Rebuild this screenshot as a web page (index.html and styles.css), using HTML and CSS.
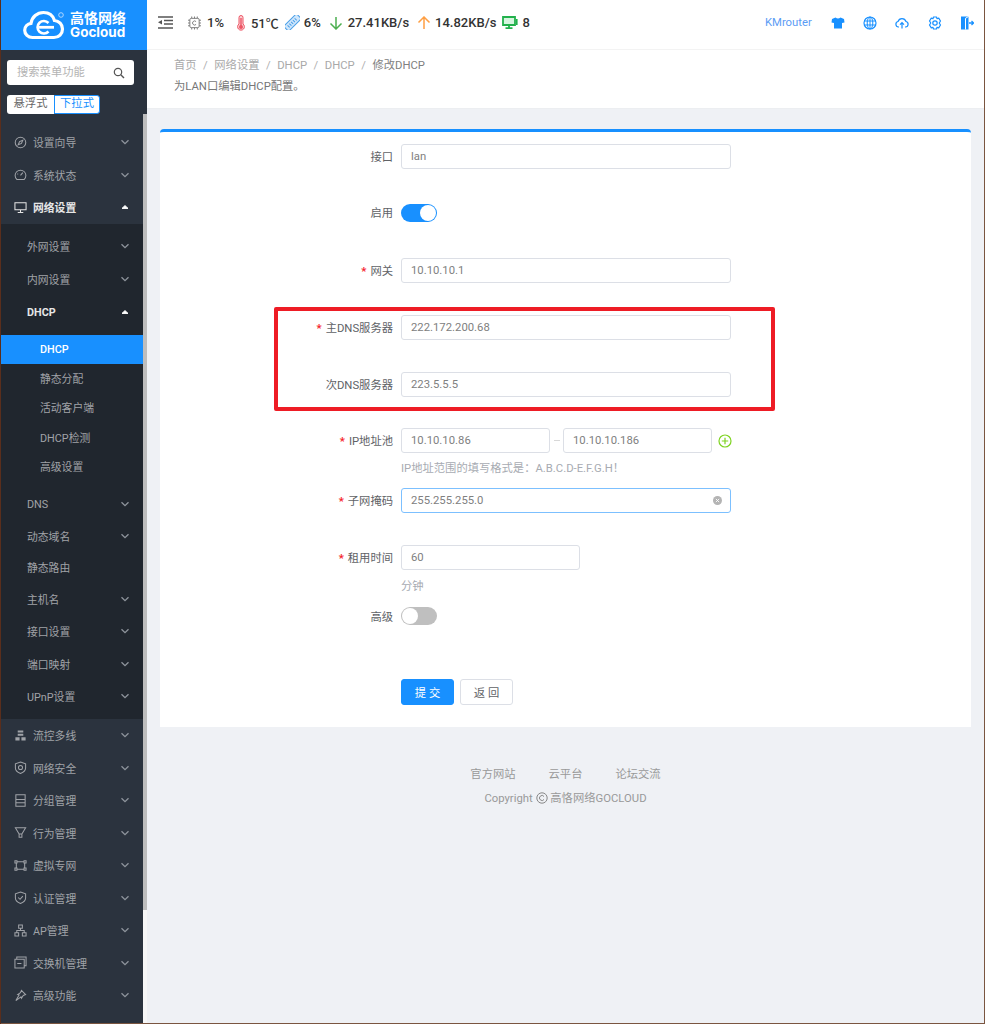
FILE: index.html
```html
<!DOCTYPE html>
<html lang="zh-CN">
<head>
<meta charset="utf-8">
<title>修改DHCP</title>
<link rel="stylesheet" href="styles.css">
</head>
<body>
<svg class="sprite" width="0" height="0" aria-hidden="true">
  <symbol id="down" viewBox="0 0 10 10"><path d="M1.500 3.200 5 6.700l3.500-3.500" fill="none" stroke="currentColor" stroke-width="1.300"/></symbol>
  <symbol id="up" viewBox="0 0 10 10"><path d="M2 6.400 5 3.600l3 2.800z" fill="currentColor" stroke="currentColor"/></symbol>
</svg>
<div class="app">
  <aside class="side">
    <a class="logo">
      <svg class="logo-mark" viewBox="0 0 44 30"><path d="M9.500 27.500C5 27.500 1.700 24.300 1.700 20.300 1.700 16.500 4.500 13.800 8 13.300 9 7 14 2.500 20.500 2.500 26 2.500 30 5.500 31.500 10.500 36 10.800 39.500 14.500 39.500 19 39.500 23.800 35.800 27.500 31 27.500Z" fill="none" stroke="#fff" stroke-width="3.200"/><path d="M25.500 13A6.300 6.300 0 1 0 25.500 21.500" fill="none" stroke="#fff" stroke-width="2.600"/><path d="M15.500 17.300H31" stroke="#fff" stroke-width="2.800"/><circle cx="38" cy="5" r="2.300" fill="none" stroke="#cfe6ff" stroke-width="0.800"/></svg>
      <span class="logo-text"><b class="logo-cn">高恪网络</b><b class="logo-en">Gocloud</b></span>
    </a>
    <div class="side-tools">
      <div class="search"><span>搜索菜单功能</span>
        <svg class="search-icon" viewBox="0 0 12 12"><circle cx="5" cy="5" r="3.700" fill="none" stroke="#555" stroke-width="1.200"/><path d="M7.800 7.800 11 11" stroke="#555" stroke-width="1.400"/></svg>
      </div>
      <div class="mode"><span class="mode-btn">悬浮式</span><span class="mode-btn on">下拉式</span></div>
    </div>
    <div class="side-body">
      <nav class="menu">
        <a class="item"><svg class="ico" viewBox="0 0 14 14"><circle cx="7" cy="7" r="5.700"/><path d="M9.500 4.500 8 8 4.500 9.500 6 6z"/></svg><span>设置向导</span><svg class="arr"><use href="#down"/></svg></a>
        <a class="item"><svg class="ico" viewBox="0 0 14 14"><path d="M3 12.300a5.800 5.800 0 1 1 8 0z"/><path d="M7 8l2.500-3M3.500 6.500h1"/></svg><span>系统状态</span><svg class="arr"><use href="#down"/></svg></a>
        <a class="item open"><svg class="ico" viewBox="0 0 14 14"><path d="M1 2h12v7.500H1zM7 9.500v2.500M4 12.500h6"/></svg><span>网络设置</span><svg class="arr"><use href="#up"/></svg></a>
        <div class="sub">
          <a class="sitem"><span>外网设置</span><svg class="arr"><use href="#down"/></svg></a>
          <a class="sitem"><span>内网设置</span><svg class="arr"><use href="#down"/></svg></a>
          <a class="sitem open"><span>DHCP</span><svg class="arr"><use href="#up"/></svg></a>
          <div class="subsub">
            <a class="leaf active">DHCP</a>
            <a class="leaf">静态分配</a>
            <a class="leaf">活动客户端</a>
            <a class="leaf">DHCP检测</a>
            <a class="leaf">高级设置</a>
          </div>
          <a class="sitem dns"><span>DNS</span><svg class="arr"><use href="#down"/></svg></a>
          <a class="sitem"><span>动态域名</span><svg class="arr"><use href="#down"/></svg></a>
          <a class="sitem plain"><span>静态路由</span></a>
          <a class="sitem"><span>主机名</span><svg class="arr"><use href="#down"/></svg></a>
          <a class="sitem"><span>接口设置</span><svg class="arr"><use href="#down"/></svg></a>
          <a class="sitem"><span>端口映射</span><svg class="arr"><use href="#down"/></svg></a>
          <a class="sitem"><span>UPnP设置</span><svg class="arr"><use href="#down"/></svg></a>
        </div>
        <a class="item"><svg class="ico" viewBox="0 0 14 14"><path class="fillo" d="M4 1.500h6v2.200H4zM4 5h6v2.200H4zM1.500 9h4.500v3.500H1.500zM8 9h4.500v3.500H8z"/></svg><span>流控多线</span><svg class="arr"><use href="#down"/></svg></a>
        <a class="item"><svg class="ico" viewBox="0 0 14 14"><path d="M7 1 12.500 3v4.500C12.500 10.500 9.500 12.500 7 13.500 4.500 12.500 1.500 10.500 1.500 7.500V3z"/><circle cx="7" cy="7" r="2.200"/></svg><span>网络安全</span><svg class="arr"><use href="#down"/></svg></a>
        <a class="item"><svg class="ico" viewBox="0 0 14 14"><path d="M2 .800h10v12.400H2zM2 6h10M2 9.500h10"/></svg><span>分组管理</span><svg class="arr"><use href="#down"/></svg></a>
        <a class="item"><svg class="ico" viewBox="0 0 14 14"><path d="M1.500 2h11L8.500 8.500h-3zM5.500 8.500v3.500h3V8.500"/></svg><span>行为管理</span><svg class="arr"><use href="#down"/></svg></a>
        <a class="item"><svg class="ico" viewBox="0 0 14 14"><path d="M2.500 3h9v8h-9z"/><path class="solid" d="M1 2h2.200v2.200H1zM10.800 2H13v2.200h-2.200zM1 9.800h2.200V12H1zM10.800 9.800H13V12h-2.200z"/></svg><span>虚拟专网</span><svg class="arr"><use href="#down"/></svg></a>
        <a class="item"><svg class="ico" viewBox="0 0 14 14"><path d="M7 1 12.500 3v4.500C12.500 10.500 9.500 12.500 7 13.500 4.500 12.500 1.500 10.500 1.500 7.500V3z"/><path d="M4.500 7 6.500 9 9.500 5.500"/></svg><span>认证管理</span><svg class="arr"><use href="#down"/></svg></a>
        <a class="item"><svg class="ico" viewBox="0 0 14 14"><path d="M5 1h4v3.500H5zM1 9.500h4V13H1zM9 9.500h4V13H9zM7 4.500v2.500M3 9.500V7h8v2.500"/></svg><span>AP管理</span><svg class="arr"><use href="#down"/></svg></a>
        <a class="item"><svg class="ico" viewBox="0 0 14 14"><path d="M1 3.500h10v9.500H1zM3 3.500V1h10v9.500h-2M3.500 8H8"/></svg><span>交换机管理</span><svg class="arr"><use href="#down"/></svg></a>
        <a class="item"><svg class="ico" viewBox="0 0 14 14"><path d="M8 1.500 12.500 6 10 7 8 10 7.500 8.500 2 12.500 5.500 6.500 4 6 7 4z"/></svg><span>高级功能</span><svg class="arr"><use href="#down"/></svg></a>
      </nav>
      <div class="sbar"><div class="sthumb"></div></div>
    </div>
  </aside>

  <div class="main">
    <header class="top">
      <svg class="fold" viewBox="0 0 15 13"><path d="M0 1h15M6 4.500h9M6 8h9M0 12h15" stroke="#555" stroke-width="1.300" fill="none"/><path d="M0 6.300 4 4v4.600z" fill="#555"/></svg>
      <svg class="st chip" viewBox="0 0 14 14"><rect x="2" y="2" width="10" height="10" rx="1.500" fill="none" stroke="#777" stroke-width="1"/><path d="M4 0v2M7 0v2M10 0v2M4 12v2M7 12v2M10 12v2M0 4h2M0 7h2M0 10h2M12 4h2M12 7h2M12 10h2" stroke="#777"/><path d="M8.700 5.500a2.200 2.200 0 1 0 0 3" fill="none" stroke="#777"/></svg>
      <b class="val v1">1%</b>
      <svg class="st therm" viewBox="0 0 8 16"><path d="M2 9V2.500a2 2 0 0 1 4 0V9a3.400 3.400 0 1 1-4 0z" fill="#fbd0d3" stroke="#ed5565"/><path d="M4 3v8" stroke="#ed5565" stroke-width="1.400"/><circle cx="4" cy="12" r="2" fill="#ed5565"/></svg>
      <b class="val v2">51℃</b>
      <svg class="st ram" viewBox="0 0 15 15"><g transform="rotate(-45 7.500 7.500)"><rect x="-1.500" y="4" width="18" height="7" rx="0.700" fill="#cfe6fb" stroke="#4a9fe8"/><path d="M2 6v3M4.500 6v3M7 6v3M9.500 6v3M12 6v3" stroke="#4a9fe8"/></g></svg>
      <b class="val v3">6%</b>
      <svg class="st dn" viewBox="0 0 14 14"><path d="M7 1v12M1.500 7.500 7 13l5.500-5.500" fill="none" stroke="#4caf50" stroke-width="1.500"/></svg>
      <b class="val v4">27.41KB/s</b>
      <svg class="st upa" viewBox="0 0 14 14"><path d="M7 13V1M1.500 6.500 7 1l5.500 5.500" fill="none" stroke="#ff9f43" stroke-width="1.500"/></svg>
      <b class="val v5">14.82KB/s</b>
      <svg class="st mon" viewBox="0 0 16 13"><path d="M1 1h12v8H1z" fill="#d6f5df" stroke="#22b14c" stroke-width="1.800"/><path d="M14.800 3v6" stroke="#22b14c" stroke-width="1.600"/><path d="M3.500 12.200h7M7 9v3" stroke="#22b14c" stroke-width="1.800"/></svg>
      <b class="val v6">8</b>
      <span class="spacer"></span>
      <a class="user">KMrouter</a>
      <svg class="act" viewBox="0 0 14 14"><path d="M4.500 1.500 1 3 0.500 6.500 3 7v5.500h8V7l2.500-.5L13 3 9.500 1.500Q7 3.500 4.500 1.500z" fill="#1890ff"/></svg>
      <svg class="act" viewBox="0 0 14 14"><g fill="none" stroke="#1890ff"><circle cx="7" cy="7" r="6" stroke-width="1.200"/><ellipse cx="7" cy="7" rx="2.800" ry="6"/><path d="M1 5h12M1 9h12M7 1v12"/></g></svg>
      <svg class="act" viewBox="0 0 14 14"><g fill="none" stroke="#1890ff" stroke-width="1.200"><path d="M4 11H3.500A2.800 2.800 0 0 1 3 5.500 4.200 4.200 0 0 1 11 5.500 2.800 2.800 0 0 1 10.500 11H10"/><path d="M7 12.500V7M5 8.700 7 6.700 9 8.700"/></g></svg>
      <svg class="act" viewBox="0 0 14 14"><g fill="none" stroke="#1890ff" stroke-width="1.200"><path d="M5.500 1h3l.5 1.700 1.700-.6L12.500 5l-1.300 2 1.300 2-1.800 2.900L9 11.300 8.500 13h-3L5 11.300l-1.700.6L1.500 9l1.300-2-1.300-2 1.800-2.900 1.700.6z" stroke-linejoin="round"/><circle cx="7" cy="7" r="2.200"/></g></svg>
      <svg class="act" viewBox="0 0 14 14"><path d="M1 .500h7.500v13H1z" fill="#1890ff"/><path d="M8.500 .500 5.500 2.300v11.200" fill="none" stroke="#fff"/><path d="M9 7h4.500M11.500 5l2.200 2-2.200 2" fill="none" stroke="#1890ff" stroke-width="1.300"/></svg>
    </header>

    <section class="crumbs">
      <div class="path"><a>首页</a><i>/</i><a>网络设置</a><i>/</i><a>DHCP</a><i>/</i><a>DHCP</a><i>/</i><em>修改DHCP</em></div>
      <p class="desc">为LAN口编辑DHCP配置。</p>
    </section>

    <section class="card">
      <form class="form">
        <div class="row r1"><label class="lab">接口</label><div class="inp wide">lan</div></div>
        <div class="row r2"><label class="lab">启用</label><span class="sw on"></span></div>
        <div class="row r3"><label class="lab req">网关</label><div class="inp wide">10.10.10.1</div></div>
        <div class="row r4"><label class="lab req">主DNS服务器</label><div class="inp wide">222.172.200.68</div></div>
        <div class="row r5"><label class="lab">次DNS服务器</label><div class="inp wide">223.5.5.5</div></div>
        <div class="row r6"><label class="lab req">IP地址池</label>
          <div class="inp half">10.10.10.86</div><span class="dash"></span><div class="inp half">10.10.10.186</div>
          <svg class="plus" viewBox="0 0 14 14"><circle cx="7" cy="7" r="6" fill="none" stroke="#7ed321" stroke-width="1.200"/><path d="M3.800 7h6.400M7 3.800v6.400" stroke="#7ed321" stroke-width="1.200"/></svg>
        </div>
        <p class="hint h1">IP地址范围的填写格式是：A.B.C.D-E.F.G.H！</p>
        <div class="row r7"><label class="lab req">子网掩码</label><div class="inp wide focus">255.255.255.0<svg class="clear" viewBox="0 0 10 10"><circle cx="5" cy="5" r="5" fill="#b4b4b4"/><path d="M3.200 3.200 6.800 6.800M6.800 3.200 3.200 6.800" stroke="#fff"/></svg></div></div>
        <div class="row r8"><label class="lab req">租用时间</label><div class="inp mid">60</div></div>
        <p class="hint h2">分钟</p>
        <div class="row r9"><label class="lab low">高级</label><span class="sw"></span></div>
        <div class="row r10"><span class="lab"></span><button type="button" class="btn pri">提 交</button><button type="button" class="btn">返 回</button></div>
      </form>
      <div class="mark"></div>
    </section>

    <footer class="foot">
      <div class="links"><a>官方网站</a><a>云平台</a><a>论坛交流</a></div>
      <div class="copy">Copyright <svg class="cc" viewBox="0 0 12 12"><circle cx="6" cy="6" r="5.200" fill="none" stroke="#888"/><path d="M8 4.500a2.500 2.500 0 1 0 0 3" fill="none" stroke="#888"/></svg> 高恪网络GOCLOUD</div>
    </footer>
  </div>
</div>
</body>
</html>
```

FILE: styles.css
```css
* { box-sizing: border-box; }
html, body { margin: 0; padding: 0; }
body {
  width: 985px;
  height: 1024px;
  overflow: hidden;
  font-family: Roboto, "Noto Sans CJK SC", sans-serif;
  font-size: 11.300px;
  color: #606266;
  background: #7a5540;
  border-left: 1px solid #5a2e1c;
}
.sprite { position: absolute; }
.app {
  display: flex;
  height: 1023px;
  margin-right: 1px;
  background: #eff1f5;
}

/* sidebar */
.side {
  width: 146px;
  flex: none;
  display: flex;
  flex-direction: column;
  background: #2b333e;
}
.logo {
  height: 50px;
  flex: none;
  background: #1890ff;
  display: flex;
  align-items: center;
  padding-left: 22px;
  gap: 4px;
}
.logo-mark { width: 44px; height: 30px; flex: none; margin-right: -1px; }
.logo-text { display: flex; flex-direction: column; color: #fff; line-height: 14px; }
.logo-cn { font-size: 14px; font-weight: 700; }
.logo-en { font-size: 13.500px; font-weight: 700; font-family: Inter, Roboto, sans-serif; }
.side-tools {
  height: 64px;
  flex: none;
  padding: 10px 0 0 6px;
}
.search {
  width: 127px;
  height: 25px;
  background: #fff;
  border-radius: 3px;
  display: flex;
  align-items: center;
  justify-content: space-between;
  padding: 0 9px 0 10px;
  font-size: 11.300px;
  color: #b4b4b4;
}
.search span { margin-top: -3px; }
.search-icon { width: 12px; height: 12px; }
.mode { display: flex; margin-top: 10px; }
.mode-btn {
  width: 47px;
  height: 19px;
  background: #fff;
  color: #666;
  font-size: 11.300px;
  line-height: 18px;
  text-align: center;
  border-radius: 3px 0 0 3px;
}
.mode-btn.on {
  width: 46px;
  color: #1890ff;
  border: 1px solid #1890ff;
  line-height: 16px;
  border-radius: 0 3px 3px 0;
}
.side-body { flex: 1; display: flex; min-height: 0; }
.menu { flex: 1; min-width: 0; padding-top: 12px; }
.sbar { width: 4px; flex: none; background: #f7f7f7; }
.sthumb { height: 796px; background: #bdbdbd; }

.item, .sitem, .leaf {
  display: flex;
  align-items: center;
  color: #a0a3a8;
  font-size: 10.800px;
}
.item { height: 32.500px; padding: 0 13px 0 13px; }
.ico {
  width: 13px;
  height: 13px;
  flex: none;
  margin-right: 6px;
  fill: none;
  stroke: #a0a3a8;
  stroke-width: 1.100;
}
.ico .solid { fill: #2b333e; }
.ico .fillo { fill: #a0a3a8; stroke: none; }
.item span, .sitem span { flex: 1; }
.arr { width: 10px; height: 10px; flex: none; color: #8e949c; }
.open { color: #e6e6e6; font-weight: 700; }
.open .arr { color: #fff; }
.open .ico { stroke: #e6e6e6; }
.sub { background: #20262e; padding: 6.500px 0; }
.sitem { height: 32.500px; padding: 0 13px 0 26px; }
.sitem.dns { height: 32px; padding-top: 1px; }
.sitem.plain { height: 30px; }
.sitem.open { padding-top: 2px; }
.subsub { padding-top: 7px; padding-bottom: 7px; }
.leaf { height: 29.300px; padding-left: 39px; padding-bottom: 1px; }
.leaf.active { background: #1890ff; color: #fff; font-weight: 500; padding-bottom: 0; }

/* main */
.main { flex: 1; min-width: 0; display: flex; flex-direction: column; }
.top {
  height: 50px;
  padding: 0 10px 4px 11px;
  flex: none;
  background: #fff;
  display: flex;
  align-items: center;
  border-bottom: 1px solid #f3f3f3;
}
.fold { width: 15px; height: 13px; margin-right: 15px; flex: none; }
.st { flex: none; }
.chip { width: 13px; height: 14px; margin-right: 6px; }
.val { font-size: 13px; font-weight: 500; color: #333; white-space: nowrap; }
.v1 { margin-right: 13px; }
.therm { width: 8px; height: 16px; margin-right: 6px; }
.v2 { margin-right: 6px; }
.ram { width: 15px; height: 15px; margin-right: 4px; }
.v3 { margin-right: 8px; }
.dn { width: 14px; height: 14px; margin-right: 5px; }
.v4 { margin-right: 8px; }
.upa { width: 14px; height: 14px; margin-right: 4px; }
.v5 { margin-right: 6px; }
.mon { width: 16px; height: 13px; margin-right: 4px; }
.spacer { flex: 1; }
.user { color: #5b9cf5; margin-right: 19px; }
.act { width: 14px; height: 14px; flex: none; margin-left: 18.300px; }
.user + .act { margin-left: 0; }

.crumbs {
  height: 58px;
  flex: none;
  background: #fff;
  padding: 6px 0 0 27px;
  box-shadow: 0 1px 0 #eceef1;
}
.path { display: flex; line-height: 16px; color: #a9a9a9; margin-top: 2px; }
.path i { font-style: normal; margin: 0 6.500px; color: #b0b0b0; }
.path em { font-style: normal; color: #808080; }
.desc { margin: 5px 0 0; line-height: 16px; color: #777; }

.card {
  position: relative;
  margin: 21px 13px 0;
  height: 598px;
  flex: none;
  background: #fff;
  border-top: 3px solid #1890ff;
  border-radius: 4px 4px 0 0;
  padding-top: 12px;
}
.row { display: flex; align-items: center; min-height: 25px; }
.lab {
  width: 233px;
  flex: none;
  margin-right: 8px;
  padding-bottom: 2px;
  text-align: right;
  color: #606266;
}
.lab.low { padding-bottom: 0; padding-top: 1px; }
.req::before { content: "*"; color: #f5222d; margin-right: 4px; font-weight: 700; }
.inp {
  height: 25px;
  border: 1px solid #dcdfe6;
  border-radius: 3px;
  padding-left: 9px;
  line-height: 23px;
  color: #808080;
  background: #fff;
}
.wide { width: 330px; }
.half { width: 149px; }
.mid { width: 179px; }
.focus { position: relative; border-color: #7cc0ff; }
.clear { position: absolute; right: 8px; top: 7px; width: 9px; height: 9px; }
.dash { width: 6px; height: 1px; background: #d8d8d8; margin: 0 3.500px; }
.plus { width: 14px; height: 14px; margin-left: 6px; }
.sw {
  position: relative;
  width: 36px;
  height: 18px;
  border-radius: 9px;
  background: #bfbfbf;
}
.sw::after {
  content: "";
  position: absolute;
  left: 1px;
  top: 1px;
  width: 16px;
  height: 16px;
  border-radius: 50%;
  background: #fff;
}
.sw.on { background: #1890ff; }
.sw.on::after { left: 19px; }
.hint { margin: 0 0 0 241px; color: #a8abb2; line-height: 16px; }
.r1 { margin-bottom: 31.500px; }
.r2 { margin-bottom: 32.500px; }
.r3 { margin-bottom: 32px; }
.r4 { margin-bottom: 32px; }
.r5 { margin-bottom: 31px; }
.h1 { margin-top: 8px; margin-bottom: 11px; }
.r7 { margin-bottom: 32px; }
.h2 { margin-top: 9px; margin-bottom: 8px; }
.r9 { margin-bottom: 50.500px; }
.btn {
  width: 53px;
  height: 26px;
  padding: 0;
  font: inherit;
  color: #606266;
  background: #fff;
  border: 1px solid #dcdfe6;
  border-radius: 3px;
  margin-right: 6px;
}
.btn.pri { background: #1890ff; border-color: #1890ff; color: #fff; }
.mark {
  position: absolute;
  left: 114px;
  top: 175px;
  width: 501px;
  height: 104px;
  border: 4px solid #ee1c25;
  border-radius: 2px;
}

.foot { text-align: center; color: #999; padding-top: 40px; }
.links { display: flex; justify-content: center; gap: 33px; line-height: 16px; }
.copy { margin-top: 8px; line-height: 16px; }
.cc { width: 12px; height: 12px; vertical-align: -2px; }
```
